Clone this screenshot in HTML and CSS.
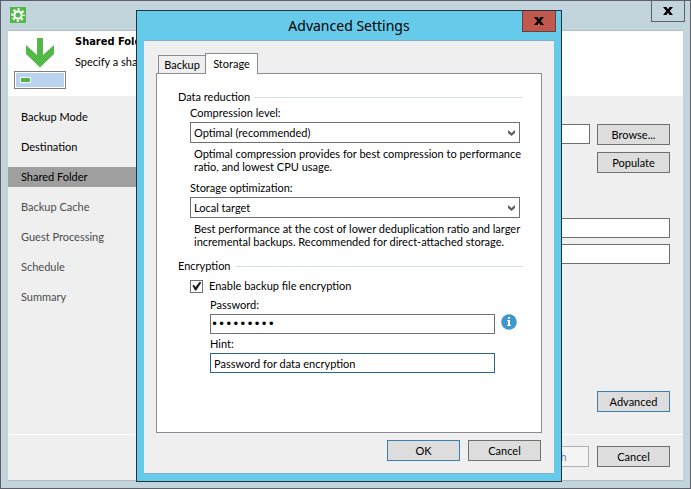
FILE: index.html
```
<!DOCTYPE html>
<html lang="en">
<head>
  <meta charset="UTF-8">
  <meta name="viewport" content="width=device-width, initial-scale=1.0">
  <title>Advanced Settings</title>
  <link rel="stylesheet" href="styles.css">
</head>
<body>
  <div class="window">
    <div class="titlebar">
      <svg class="app-icon" width="16" height="16" viewBox="0 0 16 16">
        <rect width="16" height="16" fill="#54b848"/>
        <circle cx="8" cy="8" r="3.6" fill="none" stroke="#fff" stroke-width="2"/>
        <circle cx="8" cy="8" r="5.6" fill="none" stroke="#fff" stroke-width="2.4" stroke-dasharray="2.2 2.198" stroke-dashoffset="1.1"/>
      </svg>
      <button class="close" type="button" aria-label="Close">
        <svg width="10" height="8" viewBox="0 0 10 8"><path d="M0 0h3.4L5 2.2 6.600 0H10L6.700 4 10 8H6.600L5 5.800 3.400 8H0l3.300-4z"/></svg>
      </button>
    </div>
    <div class="client">
      <div class="header">
        <svg class="header-icon" width="52" height="52" viewBox="0 0 52 52">
          <path d="M23 0h6v17l11-10v9L26 29.500 12 16V7l11 10z" fill="#54b848"/>
          <rect x=".5" y="33.500" width="51" height="17" fill="#fff" stroke="#808080"/>
          <rect x="2" y="35" width="48" height="14" fill="#b9d3ee"/>
          <rect x="6.500" y="39.500" width="10" height="5" fill="#54b848" stroke="#fff"/>
        </svg>
        <div class="header-text">
          <h1>Shared Folder</h1>
          <p>Specify a share</p>
        </div>
      </div>
      <div class="content">
        <ul class="steps">
          <li>Backup Mode</li>
          <li>Destination</li>
          <li class="current">Shared Folder</li>
          <li class="next">Backup Cache</li>
          <li class="next">Guest Processing</li>
          <li class="next">Schedule</li>
          <li class="next">Summary</li>
        </ul>
        <div class="page">
          <div class="row">
            <input class="text" type="text" aria-label="Shared folder">
            <button class="btn" type="button">Browse...</button>
          </div>
          <div class="row row-end">
            <button class="btn" type="button">Populate</button>
          </div>
          <div class="account">
            <input class="text" type="text" aria-label="Account">
            <input class="text" type="text" aria-label="Gateway">
          </div>
          <div class="row row-end advanced">
            <button class="btn focus" type="button">Advanced</button>
          </div>
        </div>
      </div>
      <div class="footer">
        <button class="btn" type="button" disabled>Finish</button>
        <button class="btn" type="button">Cancel</button>
      </div>
    </div>
  </div>

  <div class="dialog" role="dialog" aria-labelledby="dialog-title">
    <div class="dialog-title">
      <h2 id="dialog-title">Advanced Settings</h2>
      <button class="close close-red" type="button" aria-label="Close">
        <svg width="10" height="8" viewBox="0 0 10 8"><path d="M0 0h3.400L5 2.200 6.600 0H10L6.700 4 10 8H6.600L5 5.800 3.400 8H0l3.300-4z"/></svg>
      </button>
    </div>
    <div class="dialog-body">
      <div class="tabs" role="tablist">
        <button class="tab" type="button" role="tab">Backup</button>
        <button class="tab active" type="button" role="tab" aria-selected="true">Storage</button>
      </div>
      <div class="panel">
        <section class="group">
          <h3>Data reduction</h3>
          <div class="field">
            <label for="compression">Compression level:</label>
            <div class="select">
              <select id="compression"><option>Optimal (recommended)</option></select>
              <svg width="7" height="6" viewBox="0 0 7 6"><path d="M0 0l3.500 3L7 0v3L3.500 6 0 3z"/></svg>
            </div>
            <p>Optimal compression provides for best compression to performance<br>ratio, and lowest CPU usage.</p>
          </div>
          <div class="field">
            <label for="optimization">Storage optimization:</label>
            <div class="select">
              <select id="optimization"><option>Local target</option></select>
              <svg width="7" height="6" viewBox="0 0 7 6"><path d="M0 0l3.500 3L7 0v3L3.500 6 0 3z"/></svg>
            </div>
            <p>Best performance at the cost of lower deduplication ratio and larger<br>incremental backups. Recommended for direct-attached storage.</p>
          </div>
        </section>
        <section class="group">
          <h3>Encryption</h3>
          <label class="check"><input type="checkbox" checked>Enable backup file encryption</label>
          <div class="secret">
            <label for="password">Password:</label>
            <div class="password-row">
              <input class="text password" id="password" type="password" value="123456789">
              <svg width="16" height="16" viewBox="0 0 16 16">
                <circle cx="8" cy="8" r="7.800" fill="#3f97cf"/>
                <path d="M7 3h2v2H7zM6 6h3v5h1v1H6v-1h1V7H6z" fill="#fff"/>
              </svg>
            </div>
            <label for="hint">Hint:</label>
            <input class="text hint" id="hint" type="text" value="Password for data encryption">
          </div>
        </section>
      </div>
      <div class="dialog-footer">
        <button class="btn focus" type="button">OK</button>
        <button class="btn" type="button">Cancel</button>
      </div>
    </div>
  </div>
</body>
</html>
```

FILE: styles.css
```
*{
  box-sizing: border-box;
  margin: 0;
  padding: 0;
}
body,button,input,select{
  font-family: Lato, "Liberation Sans", sans-serif;
  font-size: 11px;
  color: #000;
}
body{
  position: relative;
  line-height: 16px;
}
.window{
  display: flex;
  flex-direction: column;
  min-height: 100vh;
  padding: 0 7px 7px;
  border: 1px solid #5e5e6a;
  background-color: #c3d5dc;
}
.titlebar{
  display: flex;
  justify-content: space-between;
  height: 29px;
}
.app-icon{
  margin: 6px 2px;
}
.close{
  display: flex;
  justify-content: center;
  align-items: center;
  width: 34px;
  height: 21px;
  border: 1px solid #5e5e6a;
  border-top: 0;
  background-color: #c3d5dc;
}
.titlebar .close{
  margin-right: -2px;
}
.client{
  flex: 1;
  display: flex;
  flex-direction: column;
  border-top: 1px solid #b0bcc2;
  border-bottom: 1px solid #b0bcc2;
  background-color: #efefef;
}
.header{
  display: flex;
  gap: 9px;
  height: 65px;
  padding: 0 6px;
  background-color: #fff;
}
.header-icon{
  margin-top: 7px;
}
.header h1{
  padding-top: 2px;
  font-family: "DejaVu Sans Condensed", "DejaVu Sans", sans-serif;
  font-size: 11px;
  line-height: 18px;
}
.header p{
  line-height: 22px;
}
.content{
  flex: 1;
  display: flex;
}
.steps{
  width: 160px;
  padding-top: 11px;
  list-style: none;
}
.steps li{
  height: 20px;
  margin-bottom: 10px;
  padding-left: 13px;
  line-height: 20px;
}
.steps .current{
  background-color: #9f9f9f;
}
.steps .next{
  color: #4c4c4c;
}
.page{
  flex: 1;
  display: flex;
  flex-direction: column;
  padding: 28px 13px 22px;
}
.row{
  display: flex;
  gap: 7px;
  margin-bottom: 7px;
}
.row-end{
  justify-content: flex-end;
}
.text{
  width: 100%;
  height: 20px;
  padding: 0 3px;
  border: 1px solid #707070;
  background-color: #fff;
}
.account{
  display: flex;
  flex-direction: column;
  gap: 6px;
  margin-top: 38px;
}
.advanced{
  margin-top: auto;
  margin-bottom: 0;
}
.btn{
  flex: none;
  width: 73px;
  height: 21px;
  border: 1px solid #707070;
  background-color: #dddddd;
  text-align: center;
}
.btn.focus{
  border-color: #3c7fb1;
}
.btn:disabled{
  border-color: #adb2b5;
  background-color: #f4f4f4;
  color: #838383;
}
.footer{
  display: flex;
  justify-content: flex-end;
  gap: 8px;
  padding: 11px 13px 13px;
  border-top: 1px solid #fff;
}

/* dialog over the wizard window */
.dialog{
  position: absolute;
  top: 10px;
  right: 129px;
  bottom: 7px;
  left: 136px;
  display: flex;
  flex-direction: column;
  padding: 0 7px 7px;
  border: 1px solid #26323a;
  background-color: #66caea;
}
.dialog-title{
  display: grid;
  grid-template-columns: 34px 1fr 34px;
  height: 29px;
}
.dialog-title h2{
  grid-column: 2;
  font-family: "Noto Sans", "Open Sans", sans-serif;
  font-size: 14px;
  font-weight: 400;
  line-height: 30px;
  text-align: center;
}
.close-red{
  border-color: #6b3f40;
  background-color: #c1584e;
  margin-left: 2px;
}
.dialog-body{
  flex: 1;
  display: flex;
  flex-direction: column;
  padding: 12px;
  border-top: 1px solid #7fb0c6;
  border-bottom: 1px solid #7fb0c6;
  background-color: #efefef;
}
.tabs{
  display: flex;
  align-items: flex-end;
  padding-left: 2px;
}
.tab{
  width: 48px;
  height: 18px;
  border: 1px solid #8b8b95;
  border-bottom: 0;
  background-color: #efefef;
}
.tab.active{
  width: 53px;
  height: 21px;
  margin-bottom: -1px;
  margin-left: -1px;
  padding-bottom: 1px;
  background-color: #fff;
  z-index: 1;
}
.panel{
  flex: 1;
  padding: 15px 18px 15px 21px;
  border: 1px solid #8b8b95;
  background-color: #fff;
}
.group{
  margin-bottom: 10px;
}
.group h3{
  display: flex;
  align-items: center;
  gap: 4px;
  font-size: 11px;
  font-weight: 400;
}
.group h3::after{
  content: "";
  flex: 1;
  height: 1px;
  background-color: #d5dfe5;
}
.field{
  margin: 0 3px 7px 12px;
}
.field label,.secret label{
  display: block;
  margin-bottom: 1px;
}
.select{
  position: relative;
}
.select select{
  display: block;
  width: 100%;
  height: 21px;
  padding: 0 20px 0 3px;
  border: 1px solid #707070;
  border-radius: 0;
  background-color: #fff;
  appearance: none;
}
.select svg{
  position: absolute;
  top: 8px;
  right: 5px;
  fill: #606060;
}
.field p{
  padding: 4px 0 0 4px;
  line-height: 13px;
  white-space: nowrap;
}
.check{
  display: flex;
  align-items: center;
  gap: 6px;
  margin: 4px 0 3px 12px;
}
.check input{
  width: 13px;
  height: 13px;
  border: 1px solid #707070;
  background-color: #fff;
  appearance: none;
}
.check input:checked::before{
  content: "";
  display: block;
  height: 11px;
  background-color: #212121;
  clip-path: polygon(12% 46%, 28% 40%, 42% 60%, 78% 12%, 94% 18%, 48% 90%, 36% 90%);
}
.secret{
  margin: 0 6px 0 32px;
}
.password-row{
  display: flex;
  gap: 6px;
  margin-bottom: 2px;
}
.password-row svg{
  flex: none;
}
.password{
  padding: 0;
  font-family: "DejaVu Sans", sans-serif;
  font-size: 12px;
}
.hint{
  width: calc(100% - 22px);
  border-color: #2a6496;
}
.dialog-footer{
  display: flex;
  justify-content: flex-end;
  gap: 8px;
  padding: 7px 1px 0 0;
}
```
